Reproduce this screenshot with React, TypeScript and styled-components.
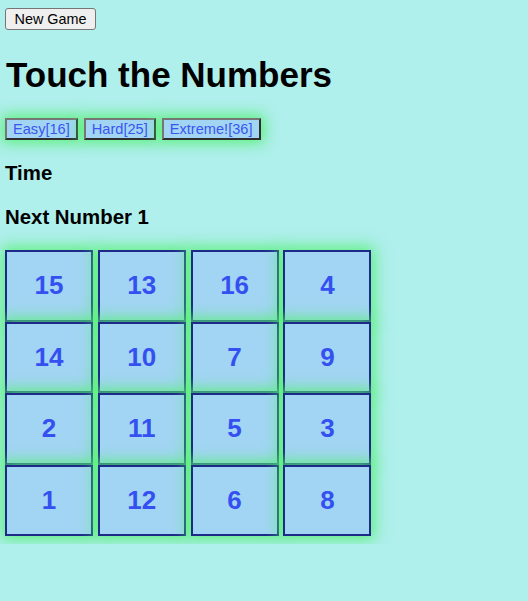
import React from "react";
import styled, { createGlobalStyle } from "styled-components";

const Global = createGlobalStyle`
  html, body {
    margin: 0;
    padding: 0;
    background: #afefec;
    font-family: "Liberation Sans", Arial, sans-serif;
    color: #000;
  }
`;

const Page = styled.div`
  display: flex;
  flex-direction: column;
  align-items: flex-start;
  padding: 8px 5px;
`;

const NewGameButton = styled.button`
  font-family: "Liberation Sans", Arial, sans-serif;
  font-size: 14.4px;
  height: 22px;
  width: 91px;
  padding: 0;
  background: #efefef;
  border: 1px solid #767676;
  border-radius: 3px;
  color: #000;
`;

const Title = styled.h1`
  margin: 25px 0 0 1px;
  font-size: 35px;
  line-height: 40px;
  font-weight: bold;
`;

const LevelRow = styled.div`
  display: flex;
  gap: 6px;
  margin-top: 23px;
`;

const LevelButton = styled.button`
  font-family: "Liberation Sans", Arial, sans-serif;
  font-size: 14.6px;
  height: 22px;
  padding: 0 6px;
  background: #a2d5f3;
  color: #3a55f0;
  border: 2px solid;
  border-color: #767676 #2e2e2e #2e2e2e #767676;
  box-shadow: 0 0 14px 3px rgba(85, 240, 115, 0.95);
`;

const Heading = styled.h3<{ $top: number }>`
  margin: ${(p) => p.$top}px 0 0 0;
  font-size: 20.4px;
  line-height: 24px;
  font-weight: bold;
`;

const Board = styled.div`
  display: grid;
  grid-template-columns: repeat(4, 88px);
  grid-auto-rows: 71.5px;
  column-gap: 4.8px;
  row-gap: 0;
  margin-top: 21px;
`;

const Cell = styled.button`
  font-family: "Liberation Sans", Arial, sans-serif;
  font-size: 26px;
  font-weight: bold;
  color: #3550f0;
  background: #a2d5f3;
  border: 2px solid #1e2a88;
  padding: 0;
  margin: 0;
  box-shadow: 0 0 14px 3px rgba(85, 240, 115, 0.95);
`;

const numbers = [15, 13, 16, 4, 14, 10, 7, 9, 2, 11, 5, 3, 1, 12, 6, 8];

export default function App() {
  return (
    <>
      <Global />
      <Page>
        <NewGameButton>New Game</NewGameButton>
        <Title>Touch the Numbers</Title>
        <LevelRow>
          <LevelButton>Easy[16]</LevelButton>
          <LevelButton>Hard[25]</LevelButton>
          <LevelButton>Extreme![36]</LevelButton>
        </LevelRow>
        <Heading $top={21}>Time</Heading>
        <Heading $top={20}>Next Number 1</Heading>
        <Board>
          {numbers.map((n) => (
            <Cell key={n}>{n}</Cell>
          ))}
        </Board>
      </Page>
    </>
  );
}
